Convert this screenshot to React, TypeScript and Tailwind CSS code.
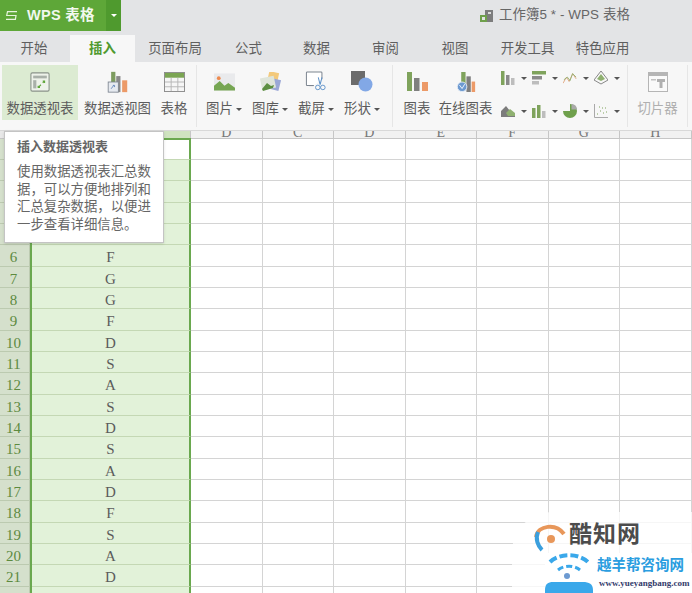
import React from "react";

const FONT = "font-['Liberation_Sans','Noto_Sans_CJK_SC',sans-serif]";
const rows: [number, string][] = [
  [1, ""], [2, ""], [3, ""], [4, ""], [5, ""],
  [6, "F"], [7, "G"], [8, "G"], [9, "F"], [10, "D"], [11, "S"], [12, "A"], [13, "S"], [14, "D"], [15, "S"], [16, "A"], [17, "D"], [18, "F"], [19, "S"], [20, "A"], [21, "D"], [22, ""],
];
const tabs: [string, string][] = [
  ["开始", "w-[70px] pr-[2px]"], ["插入", "w-[65px]"], ["页面布局", "w-[80px]"], ["公式", "w-[67px]"], ["数据", "w-[69px]"],
  ["审阅", "w-[69px]"], ["视图", "w-[70px]"], ["开发工具", "w-[75px]"], ["特色应用", "w-[75px]"],
];

function Caret() {
  return <span className="inline-block w-0 h-0 border-x-[3px] border-x-transparent border-t-[3px] border-t-[#555] ml-[3px] align-middle" />;
}

function Tool({ label, w, caret, icon, active, muted }: { label: string; w: string; caret?: boolean; icon: React.ReactNode; active?: boolean; muted?: boolean }) {
  return (
    <div className={`${w} h-[55px] shrink-0 flex flex-col items-center ${active ? "bg-[#dcebd2]" : ""}`}>
      <div className="h-[33px] flex items-center justify-center">{icon}</div>
      <div className={`text-[13.4px] leading-[18px] mt-[2px] whitespace-nowrap ${muted ? "text-[#b0b0b0]" : "text-[#5c5c5c]"}`}>
        {label}{caret && <Caret />}
      </div>
    </div>
  );
}

const Sep = () => <div className="w-px h-[62px] bg-[#e6e6e6] shrink-0 self-start" />;

const IPivot = (
  <svg width="20" height="20" viewBox="0 0 22 22"><rect x="1" y="1" width="20" height="20" rx="1.5" fill="#eef2ea" stroke="#8a938a" strokeWidth="1.2" /><rect x="3.5" y="4" width="15" height="3" fill="#a9b0a9" /><rect x="3.5" y="9" width="3.5" height="9" fill="#a9b0a9" /><path d="M10 16l2-2M14 12l2-2M11 17h-2v-2M16 12v-2h-2" stroke="#5fa53a" strokeWidth="1.3" fill="none" /></svg>
);
const IPivotChart = (
  <svg width="21" height="22" viewBox="0 0 23 26"><rect x="4" y="1" width="5" height="13" fill="#7d9c5f" /><rect x="10" y="6" width="5" height="19" fill="#8a8a8a" /><rect x="17" y="11" width="6" height="14" fill="#ec9a68" /><rect x=".5" y="13" width="12" height="12" fill="#e6eaf0" stroke="#7d8590" /><path d="M4 21l3-4M8 19v-2H6" stroke="#5b7fb5" fill="none" /></svg>
);
const ITable = (
  <svg width="21" height="20" viewBox="0 0 22 21"><rect x=".5" y=".5" width="21" height="20" fill="#f6f6f6" stroke="#8b8b8b" /><rect x="1" y="1" width="20" height="5" fill="#7ba553" /><path d="M1 10.5h20M1 15.5h20M7.500 6v14M14.500 6v14" stroke="#b5b5b5" /></svg>
);
const IPicture = (
  <svg width="21" height="18" viewBox="0 0 22 18"><rect width="22" height="18" fill="#e9eaec" /><circle cx="5" cy="5" r="2" fill="#ee8a4e" /><path d="M0 18v-5l6-5 5 5 4-3 7 5v3z" fill="#76a653" /></svg>
);
const IGallery = (
  <svg width="21" height="20" viewBox="0 0 21 20"><rect x="8" y="0" width="10" height="13" fill="#f3c97b" transform="rotate(12 13 6)" /><rect x="11" y="7" width="9" height="11" fill="#9aa7d6" transform="rotate(14 15 12)" /><rect x="1" y="5" width="14" height="12" fill="#dfe5da" transform="rotate(-12 8 11)" /><path d="M2 17l5-6 4 3 3-1-1 3-10 3z" fill="#5d8f42" /></svg>
);
const IScreenshot = (
  <svg width="22" height="21" viewBox="0 0 23 23"><path d="M9 16H2a1 1 0 0 1-1-1V2a1 1 0 0 1 1-1h15a1 1 0 0 1 1 1v7" fill="#fff" stroke="#7d8590" strokeWidth="1.1" /><path d="M4 16h5" stroke="#7d8590" /><path d="M14 7l2 8M18 7l-2 8" stroke="#5b90c8" strokeWidth="1.1" /><circle cx="13.500" cy="18" r="2.500" fill="none" stroke="#5b90c8" /><circle cx="19" cy="18" r="2.500" fill="none" stroke="#5b90c8" /></svg>
);
const IShape = (
  <svg width="22" height="21" viewBox="0 0 22 21"><rect width="14" height="14" fill="#6b6b6b" /><circle cx="14.500" cy="13.500" r="7" fill="#82a8e6" /></svg>
);
const IChart = (
  <svg width="21" height="19" viewBox="0 0 21 19"><rect width="5" height="19" fill="#7fa35c" /><rect x="7" y="6" width="5.500" height="13" fill="#7f7f7f" /><rect x="15" y="10" width="6" height="9" fill="#ec9a68" /></svg>
);
const IOnlineChart = (
  <svg width="20" height="20" viewBox="0 0 21 23"><rect x="5" width="5" height="14" fill="#7fa35c" /><rect x="11" y="5" width="5" height="18" fill="#7f7f7f" /><rect x="17" y="11" width="4" height="12" fill="#ec9a68" /><circle cx="6" cy="17" r="5.500" fill="#6d9ad1" stroke="#e8eef6" /><path d="M3 15l3 4 3-5" stroke="#fff" fill="none" /></svg>
);
const ISlicer = (
  <svg width="20" height="20" viewBox="0 0 20 20"><rect x=".5" y=".5" width="19" height="19" fill="#fafafa" stroke="#b5b5b5" /><rect x="1" y="1" width="18" height="3" fill="#b5b5b5" /><rect x="3" y="7" width="5" height="1.500" fill="#c2c2c2" /><path d="M9 7h8v3h-2.500v6h-3v-6H9z" fill="#b0b0b0" /></svg>
);

const small: React.ReactNode[] = [
  <svg width="14" height="14" viewBox="0 0 14 14"><rect x="0" width="3.500" height="14" fill="#7fa35c" /><rect x="5" y="4" width="3.500" height="10" fill="#8a8a8a" /><rect x="10" y="7" width="3.500" height="7" fill="#bdbdbd" /></svg>,
  <svg width="14" height="14" viewBox="0 0 14 14"><rect width="14" height="3.500" fill="#7fa35c" /><rect y="5" width="10" height="3.500" fill="#8a8a8a" /><rect y="10" width="7" height="3.500" fill="#bdbdbd" /></svg>,
  <svg width="14" height="14" viewBox="0 0 16 14" fill="none"><path d="M0 13l4-7 3 5 4-9 4 6" stroke="#e0a27a" /><path d="M1 9l4-3 3 4 3-8 4 4" stroke="#8fb070" /></svg>,
  <svg width="14" height="14" viewBox="0 0 14 14" fill="none"><path d="M7 0l7 9-7 4-7-4z" stroke="#888" /><path d="M7 3l4 5-4 2-4-2z" fill="#8fb070" /></svg>,
  <svg width="14" height="12" viewBox="0 0 14 12"><path d="M0 12V6l5-5 4 5 5 3v3z" fill="#7c7c7c" /><path d="M5 8l4-4 5 4v3H7z" fill="#8fb070" /></svg>,
  <svg width="14" height="14" viewBox="0 0 14 14"><rect y="4" width="3.500" height="10" fill="#7fa35c" /><rect x="5" y="1" width="3.500" height="13" fill="#7fa35c" /><rect x="10" y="7" width="3.500" height="7" fill="#bdbdbd" /></svg>,
  <svg width="14" height="14" viewBox="0 0 14 14"><path d="M7 7V0a7 7 0 1 1-7 7z" fill="#6fa04c" /><path d="M8.500 0a6 6 0 0 1 5.500 5.500H8.500z" fill="#a9a9a9" /></svg>,
  <svg width="14" height="14" viewBox="0 0 14 14" fill="none"><path d="M.5 0v13.500H14" stroke="#a9a9a9" /><path d="M3 10h1M6 7h1M9 9h1M11 4h1M5 3h1M8 4h1M12 8h1" stroke="#7fa35c" /></svg>,
];

export default function App() {
  return (
    <div className={`relative w-[692px] h-[593px] overflow-hidden bg-white ${FONT}`}>
      {/* Title bar */}
      <div className="h-[35px] bg-[#e3e4e6] flex items-start">
        <div className="h-[31px] w-[106px] bg-[#5ea738] flex items-center pl-[6px] text-[#f2f8ee] font-bold text-[14.5px] whitespace-nowrap">
          <svg width="11" height="9" viewBox="0 0 11 9" className="mr-[10px]" fill="none" stroke="#e8f4df" strokeWidth="1.2"><path d="M11 .6H1.500L.7 4.500h9.300L9.400 8.400H0" /></svg>
          <span className="tracking-[0.3px]">WPS 表格</span>
        </div>
        <div className="h-[31px] w-[15px] bg-[#4f9a2e] flex items-center justify-center">
          <span className="w-0 h-0 border-x-[3px] border-x-transparent border-t-[3px] border-t-white" />
        </div>
        <div className="flex-1 flex items-center h-[31px] pl-[359px] text-[13.4px] tracking-[0.1px] text-[#666] whitespace-nowrap">
          <svg width="14" height="14" viewBox="0 0 14 14" className="mr-[5px]"><rect x="5" y="1" width="8" height="12" fill="#7d7d7d" /><rect x="8" y="3" width="3" height="2" fill="#ddd" /><rect x="0" y="6" width="7" height="7" fill="#6fa04c" /><rect x="2" y="8" width="3" height="3" fill="#e3e4e6" /></svg>
          工作簿5 * - WPS 表格
        </div>
      </div>

      {/* Tabs */}
      <div className="h-[27px] bg-[#e3e4e6] flex">
        {tabs.map(([t, w]) => (
          <div
            key={t}
            className={`${w} shrink-0 flex items-center justify-center pt-[2px] text-[13.4px] whitespace-nowrap ${t === "插入" ? "bg-[#f7f7f7] text-[#4f9a2e] font-bold" : "text-[#5f5f5f]"}`}
          >
            {t}
          </div>
        ))}
      </div>

      {/* Ribbon */}
      <div className="h-[69px] bg-[#f7f7f7] flex items-start pt-[3px] pl-[2px] border-b border-[#d8d8d8]">
        <Tool label="数据透视表" w="w-[76px]" active icon={IPivot} />
        <div className="w-[5px] shrink-0" />
        <Tool label="数据透视图" w="w-[69px]" icon={IPivotChart} />
        <div className="w-[5px] shrink-0" />
        <Tool label="表格" w="w-[34px]" icon={ITable} />
        <div className="w-[5px] shrink-0" />
        <Sep />
        <div className="w-[4px] shrink-0" />
        <Tool label="图片" w="w-[46px]" caret icon={IPicture} />
        <Tool label="图库" w="w-[46px]" caret icon={IGallery} />
        <Tool label="截屏" w="w-[46px]" caret icon={IScreenshot} />
        <Tool label="形状" w="w-[46px]" caret icon={IShape} />
        <div className="w-[7px] shrink-0" />
        <Sep />
        <div className="w-[6px] shrink-0" />
        <Tool label="图表" w="w-[36px]" icon={IChart} />
        <div className="w-[3px] shrink-0" />
        <Tool label="在线图表" w="w-[55px]" icon={IOnlineChart} />
        <div className="w-[124px] shrink-0 h-[60px] grid grid-cols-4 ml-[8px] pt-[4px] auto-rows-[33px]">
          {small.map((s, i) => (
            <div key={i} className="flex items-center h-[18px] gap-[6px]">
              {s}
              <span className="w-0 h-0 border-x-[3px] border-x-transparent border-t-[3px] border-t-[#555]" />
            </div>
          ))}
        </div>
        <div className="w-[2px] shrink-0" />
        <Sep />
        <Tool label="切片器" w="w-[59px]" muted icon={ISlicer} />
        <Sep />
      </div>

      {/* Column headers (mostly cut by the ribbon) */}
      <div className="h-[7.600px] bg-[#f1f1f1] border-b border-[#c6c6c6] flex text-[14px] leading-[4px] text-[#777] font-['Liberation_Serif',serif] overflow-hidden">
        <div className="w-[30px] bg-[#e8e8e8]" />
        <div className="w-[161px] bg-[#cfe3c0] border-r border-[#c6c6c6]" />
        {["D", "C", "D", "E", "F", "G", "H"].map((c, i) => (
          <div key={i} className="w-[71.500px] text-center border-r border-[#c6c6c6]">{c}</div>
        ))}
      </div>

      {/* Grid */}
      <div className="relative">
        {rows.map(([n, v]) => (
          <div key={n} className="h-[21.350px] flex font-['Liberation_Serif',serif] text-[15px]">
            <div className="w-[30px] shrink-0 bg-[#d5e0cc] text-[#5d8a3f] flex items-center justify-center pt-[4px] pr-[2px] border-r border-b border-[#bccab0]">{n}</div>
            <div className={`w-[161px] shrink-0 flex items-center justify-center pt-[4px] pl-[2px] text-[#5c5c5c] border-r-2 border-r-[#6aa84f] border-b border-b-[#c4d8b4] ${n === 1 ? "bg-white" : "bg-[#e2f2d9]"}`}>{v}</div>
            {[0, 1, 2, 3, 4, 5, 6].map((c) => (
              <div key={c} className="w-[71.500px] shrink-0 border-r border-b border-[#d4d4d4]" />
            ))}
          </div>
        ))}
        <div className="absolute left-[30px] -top-[1px] w-[161px] h-[2px] bg-[#6aa84f]" />
        <div className="absolute left-[30px] top-0 w-[2px] h-[480px] bg-[#6aa84f]" />
      </div>

      {/* Tooltip */}
      <div className="absolute left-[4px] top-[131px] w-[160px] h-[112px] bg-white border border-[#c4c4c4] shadow-sm pl-[12px] pr-[10px] pt-[6px] text-[#666]">
        <div className="text-[13px] leading-[18px] font-bold">插入数据透视表</div>
        <div className="text-[13.400px] leading-[17.700px] mt-[7px] w-[137px]">使用数据透视表汇总数据，可以方便地排列和汇总复杂数据，以便进一步查看详细信息。</div>
      </div>

      {/* Watermark */}
      <div className="absolute left-[512px] top-[512px] w-[180px] h-[81px] bg-white/80 rounded-tl-[40px]" />
      <div className="absolute left-[532px] top-[520px] flex items-start">
        <svg width="36" height="36" viewBox="0 0 36 36" fill="none"><path d="M4 17C6 5 24 3 32 14" stroke="#e8975a" strokeWidth="4" /><path d="M6 12c-3 7 0 14 4 18" stroke="#3b9fdd" strokeWidth="4" /><circle cx="19" cy="19" r="4" fill="#e8975a" /></svg>
        <span className="text-[23px] leading-[26px] font-bold text-[#4c4c4c] tracking-[1px] ml-[1px] mt-[1px]">酷知网</span>
      </div>
      <div className="absolute left-[545px] top-[553px] w-[147px] h-[40px] bg-white" />
      <div className="absolute left-[545px] top-[552px] flex">
        <svg width="52" height="41" viewBox="0 0 52 41" fill="none"><path d="M5 10C14 1 34 1 43 10" stroke="#3aa8ea" strokeWidth="4" strokeDasharray="8 3" /><path d="M13 18c6-5 16-5 22 0" stroke="#3aa8ea" strokeWidth="3" strokeDasharray="6 3" /><circle cx="22" cy="24" r="3" fill="#6d9ad1" /><path d="M0 41v-3c0-6 3-8 8-8h30c6 0 10 2 10 8v3z" fill="#3aa8ea" /></svg>
        <div className="mt-[4px]">
          <div className="text-[14.500px] leading-[18px] font-bold text-[#2a9de0] whitespace-nowrap">越羊帮咨询网</div>
          <div className="text-[9px] leading-[12px] mt-[3px] ml-[2px] font-bold text-[#333a6b] font-['Liberation_Serif',serif] whitespace-nowrap">www.yueyangbang.com</div>
        </div>
      </div>
    </div>
  );
}
